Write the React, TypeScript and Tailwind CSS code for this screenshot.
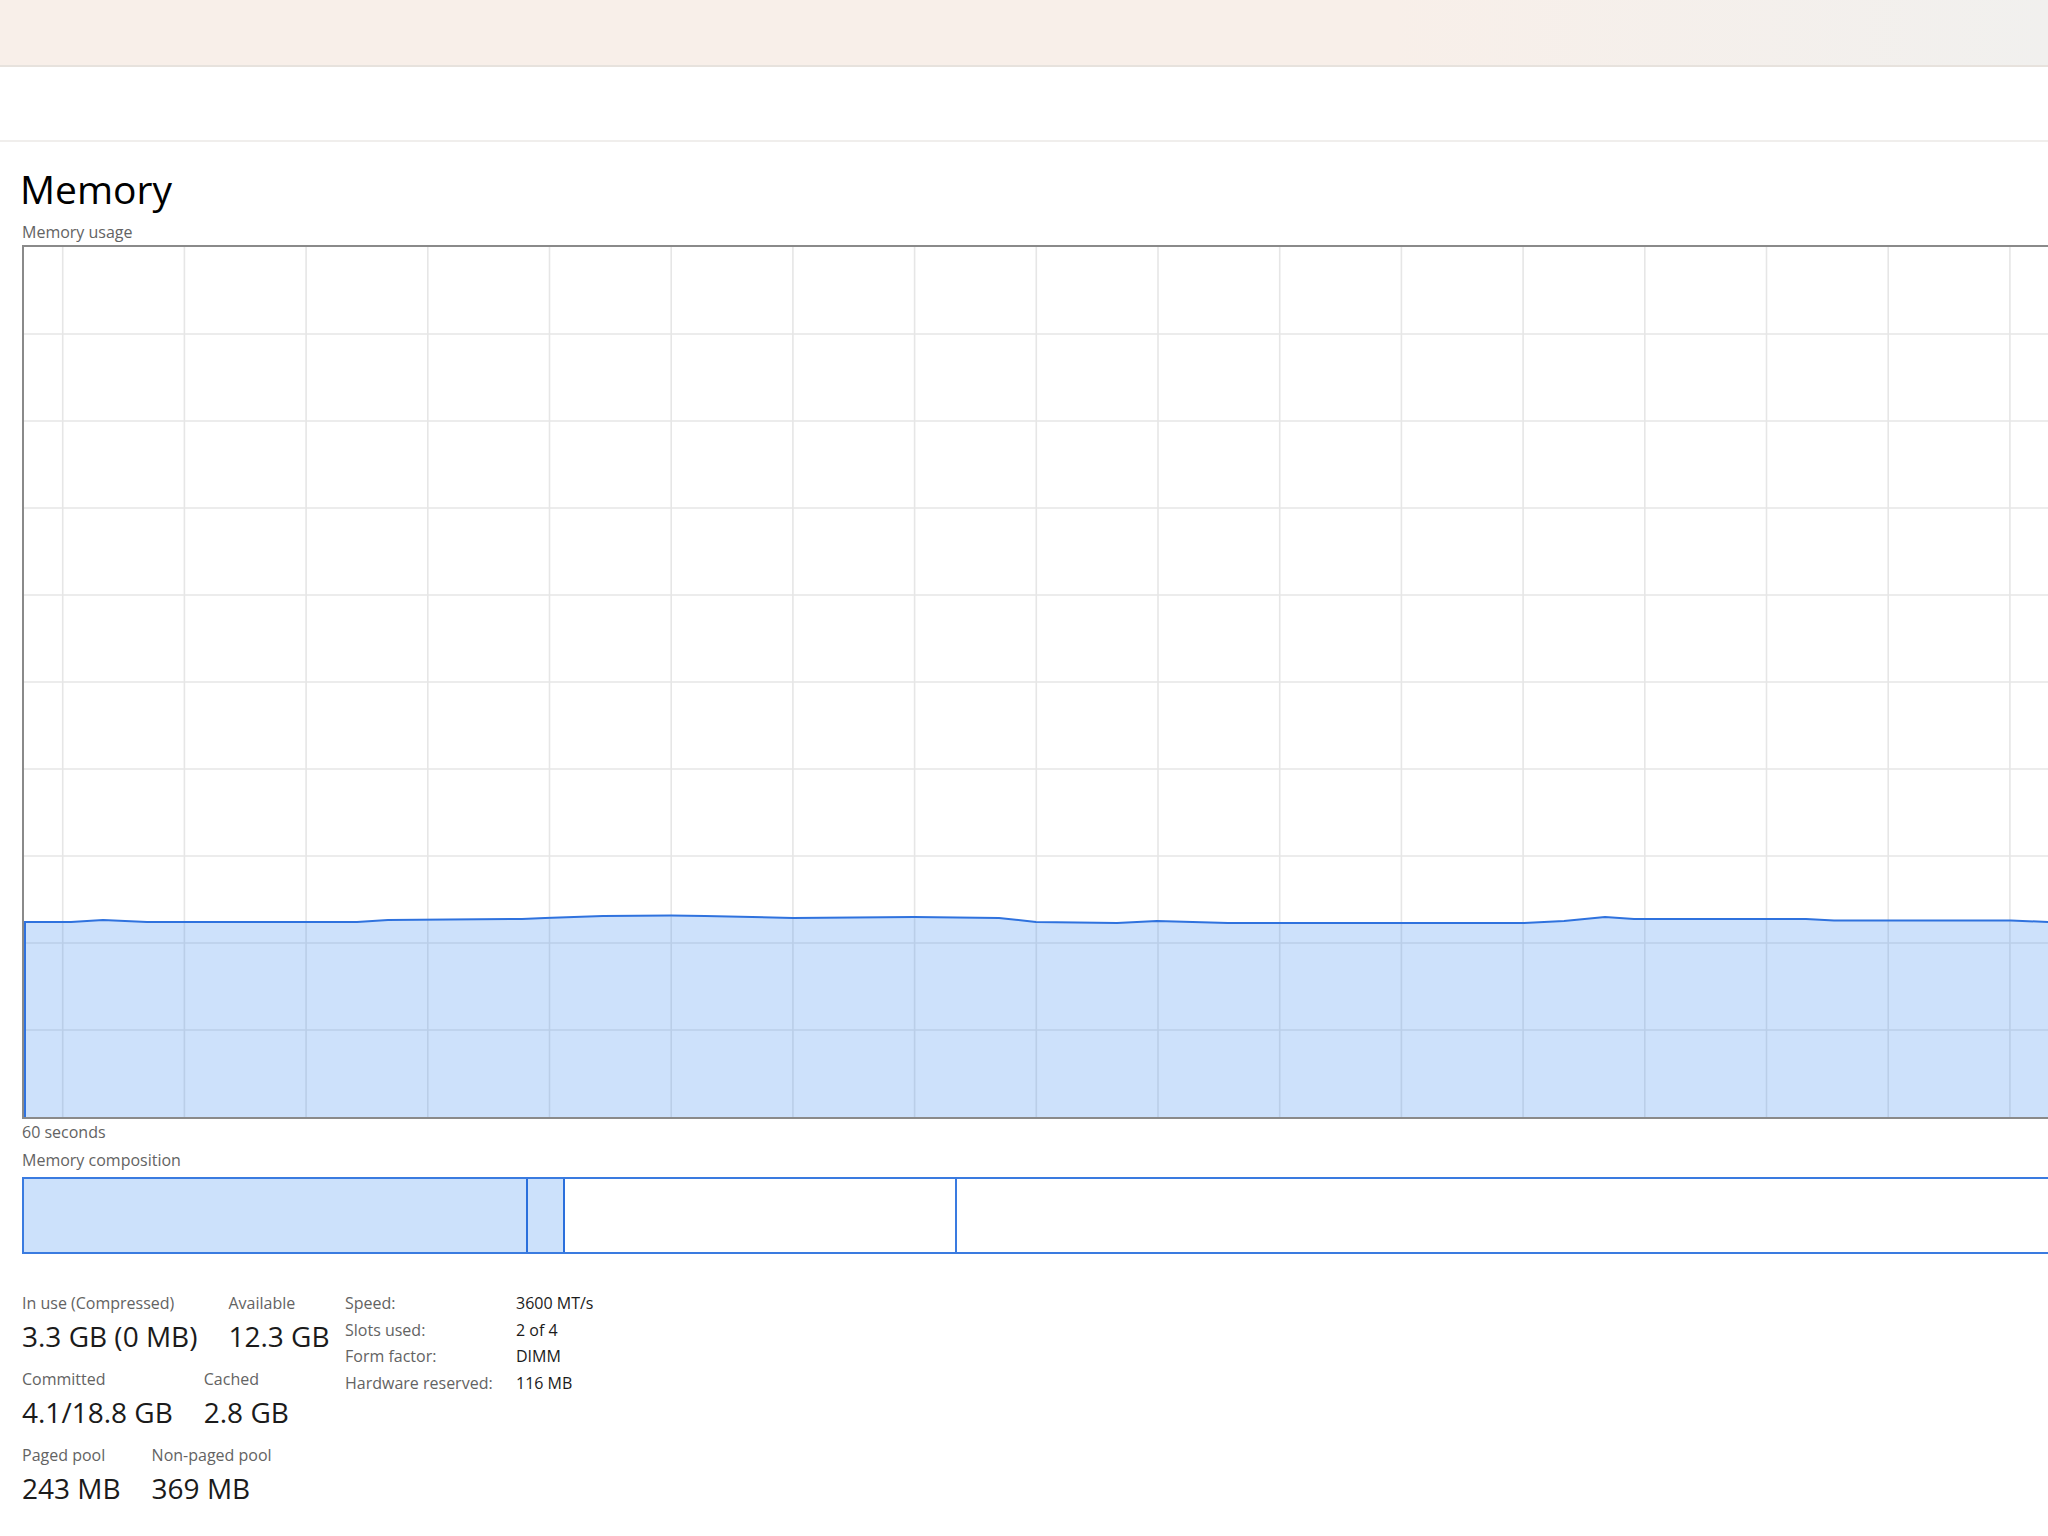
import React from "react";

// Memory usage samples, in chart-local pixels (x across, y down from the top of the plot)
const samples: [number, number][] = [
  [0, 675], [47, 675], [79, 673], [123, 675], [150, 675], [333, 675], [364, 673],
  [498, 672], [521, 671], [579, 669], [647, 668.5], [681, 669], [769, 671], [890, 670],
  [975, 671], [1012, 675], [1093, 676], [1133, 674], [1204, 676], [1500, 676],
  [1540, 674], [1581, 670], [1610, 672], [1782, 672], [1810, 673.5], [1987, 673.5],
  [2024, 675], [2096, 675],
];

const PLOT_W = 2096;
const PLOT_H = 870;

function UsageChart() {
  const vLines = Array.from({ length: 18 }, (_, k) => 38.7 + k * 121.7);
  const hLines = Array.from({ length: 9 }, (_, k) => (k + 1) * 87);
  const pts = samples.map(([x, y]) => `${x},${y}`).join(" ");
  const area = `M0,${PLOT_H} L${pts.replace(/ /g, " L")} L${PLOT_W},${PLOT_H} Z`;
  return (
    <svg width={PLOT_W} height={PLOT_H} className="block">
      {vLines.map((x) => (
        <line key={`v${x}`} x1={x} y1={0} x2={x} y2={PLOT_H} stroke="#e6e6e6" strokeWidth={1.6} />
      ))}
      {hLines.map((y) => (
        <line key={`h${y}`} x1={0} y1={y} x2={PLOT_W} y2={y} stroke="#e6e6e6" strokeWidth={1.6} />
      ))}
      <path d={area} fill="#3c8cf0" fillOpacity={0.26} />
      <polyline
        points={`1,${PLOT_H} 1,${samples[0][1]} ${pts}`}
        fill="none"
        stroke="#2f72de"
        strokeWidth={2}
        strokeLinejoin="round"
      />
    </svg>
  );
}

function Stat({ label, value }: { label: string; value: string }) {
  return (
    <div className="flex flex-col gap-[6px]">
      <div className="text-[16px] leading-[20px] text-[#636363] whitespace-nowrap">{label}</div>
      <div className="text-[28px] leading-[34px] text-[#1b1b1b] whitespace-nowrap">{value}</div>
    </div>
  );
}

const hardware: [string, string][] = [
  ["Speed:", "3600 MT/s"],
  ["Slots used:", "2 of 4"],
  ["Form factor:", "DIMM"],
  ["Hardware reserved:", "116 MB"],
];

export default function App() {
  return (
    <div className="w-[2048px] h-[1536px] overflow-hidden bg-white font-['Open_Sans',sans-serif]">
      <div className="h-[67px] border-b-2 border-[#e7e2dd] bg-[linear-gradient(90deg,#f8efe9_0%,#f8efe9_68%,#f1f0ee_100%)]" />
      <div className="h-[75px] border-b-2 border-[#f0eeec] bg-white" />

      <main className="pl-[22px] pt-[27px]">
        <h1 className="-ml-[2px] text-[39px] leading-[39px] font-normal text-black">Memory</h1>
        <div className="mt-[14px] text-[16px] leading-[20px] text-[#636363]">Memory usage</div>

        <div className="mt-[3px] w-[2100px] h-[874px] border-2 border-[#8a8a8a]">
          <UsageChart />
        </div>

        <div className="mt-[3px] text-[16px] leading-[20px] text-[#636363]">60 seconds</div>
        <div className="mt-[8px] text-[16px] leading-[20px] text-[#636363]">Memory composition</div>

        <div className="mt-[7px] w-[2100px] h-[77px] flex border-2 border-[#3a7be0]">
          <div className="w-[504px] shrink-0 bg-[#cce1fb] border-r-2 border-[#2a6fdc]" />
          <div className="w-[37px] shrink-0 bg-[#cce1fb] border-r-2 border-[#2a6fdc]" />
          <div className="w-[392px] shrink-0 bg-white border-r-2 border-[#3a7be0]" />
          <div className="flex-1 bg-white" />
        </div>

        <div className="mt-[39px] flex items-start">
          <div className="w-[323px] shrink-0 flex flex-col gap-[16px]">
            <div className="flex gap-[31px]">
              <Stat label="In use (Compressed)" value="3.3 GB (0 MB)" />
              <Stat label="Available" value="12.3 GB" />
            </div>
            <div className="flex gap-[31px]">
              <Stat label="Committed" value="4.1/18.8 GB" />
              <Stat label="Cached" value="2.8 GB" />
            </div>
            <div className="flex gap-[31px]">
              <Stat label="Paged pool" value="243 MB" />
              <Stat label="Non-paged pool" value="369 MB" />
            </div>
          </div>

          <div className="-mt-[3px] grid grid-cols-[171px_auto] content-start text-[16px] leading-[26.7px]">
            {hardware.map(([k, v]) => (
              <React.Fragment key={k}>
                <div className="text-[#636363] whitespace-nowrap">{k}</div>
                <div className="text-[#1b1b1b] whitespace-nowrap">{v}</div>
              </React.Fragment>
            ))}
          </div>
        </div>
      </main>
    </div>
  );
}
